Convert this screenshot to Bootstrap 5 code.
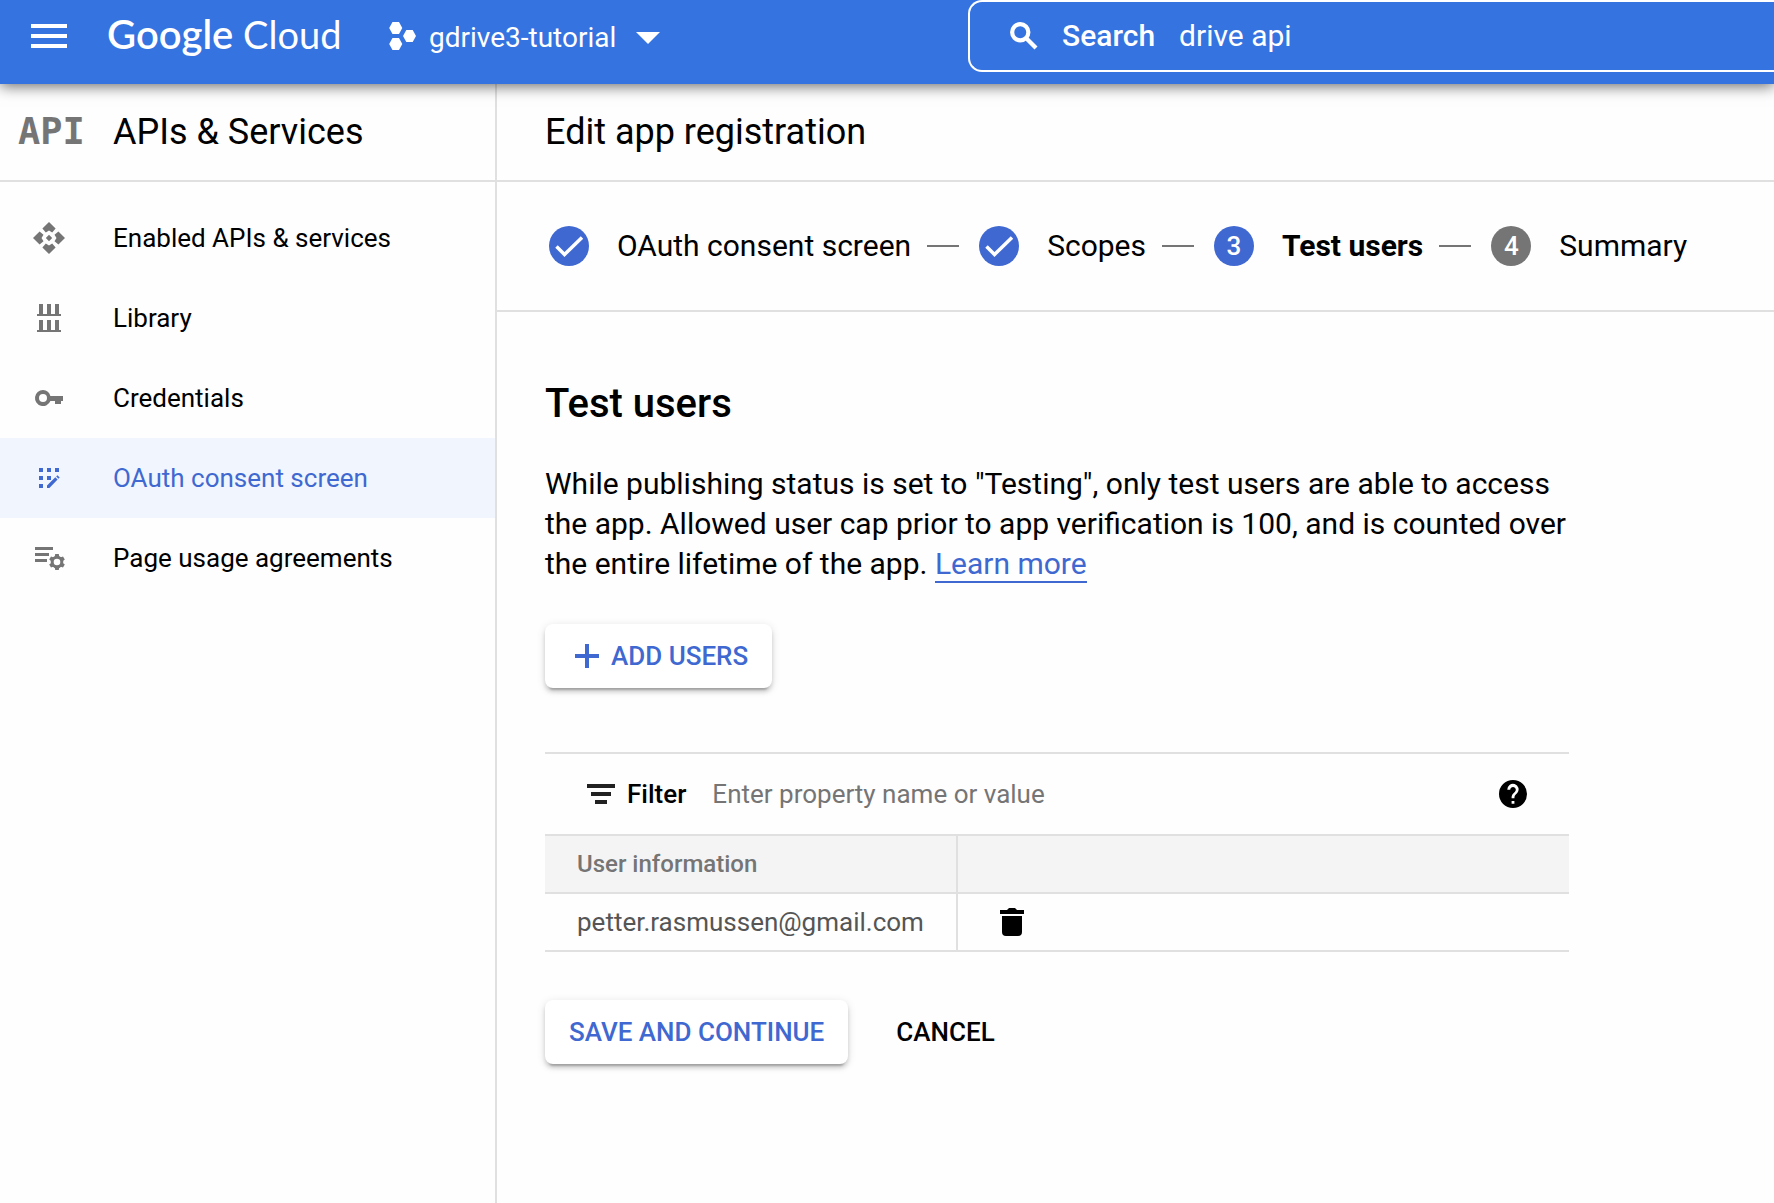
<!DOCTYPE html>
<html lang="en">
<head>
<meta charset="utf-8">
<meta name="viewport" content="width=device-width, initial-scale=1">
<title>Edit app registration – APIs &amp; Services – Google Cloud</title>
<link href="https://cdn.jsdelivr.net/npm/bootstrap@5.3.0/dist/css/bootstrap.min.css" rel="stylesheet">
<style>
  :root { --gc-header: #3573e1; --gc-blue: #3f68d1; --gc-line: #e0e0e0; --gc-grey: #757575; }
  body { font-family: Roboto, "Liberation Sans", sans-serif; font-size: 26px; line-height: 32px; color: #000; background: #fefefe; }
  svg { display: block; flex: none; }
  .topbar { height: 84px; background: var(--gc-header); color: #fff; box-shadow: 0 2px 14px rgba(0, 0, 0, .6); z-index: 2; }
  .icon-btn { background: none; border: 0; padding: 0; color: inherit; }
  .topbar-left { width: 968px; padding-left: 31px; padding-bottom: 12px; }
  .brand { font-family: Lato, "Open Sans", sans-serif; font-size: 38px; line-height: 44px; margin-left: 40px; padding-bottom: 4px; width: 234px; }
  .brand-strong { font-size: 40px; font-weight: 600; }
  .project { font-size: 28px; line-height: 36px; margin-left: 48px; gap: 12px; }
  .project span { padding-top: 4px; }
  .searchbox { height: 72px; border: 2px solid #fff; border-right: 0; border-radius: 14px 0 0 14px; padding-left: 36px; font-size: 30px; }
  .searchbox label { margin: 0 24px 0 20px; }
  .searchbox input { background: none; border: 0; outline: 0; color: #fff; padding: 0; min-width: 0; }
  .shell { min-height: calc(100vh - 84px); }
  .sidebar { width: 497px; border-right: 2px solid var(--gc-line); }
  .titlebar { height: 98px; border-bottom: 2px solid var(--gc-line); }
  .titlebar h1, .titlebar h2 { font-size: 36px; line-height: 44px; font-weight: 400; margin: 0; }
  .api-head { padding-left: 18px; }
  .api-mark { width: 95px; font: 700 37px/44px "DejaVu Sans Mono", monospace; color: var(--gc-grey); }
  .side-link { height: 80px; padding-left: 33px; color: #000; gap: 48px; }
  .side-link svg { color: var(--gc-grey); }
  .side-link.active { background: #f0f5fe; color: var(--gc-blue); }
  .side-link.active svg { color: var(--gc-blue); }
  .stepper { height: 130px; border-bottom: 2px solid var(--gc-line); padding: 0 52px; font-size: 30px; line-height: 40px; }
  .step-dot { width: 40px; height: 40px; background: var(--gc-blue); color: #fff; font-size: 26px; margin-right: 28px; }
  .step-dot.pending { background: var(--gc-grey); }
  .step-line { width: 32px; height: 2px; background: var(--gc-grey); margin: 0 20px 0 16px; }
  .panel { padding: 66px 48px 48px; }
  .panel-inner { max-width: 1024px; }
  .panel h3 { font-size: 40px; line-height: 52px; font-weight: 500; margin: 0 0 34px; }
  .intro { font-size: 30px; line-height: 40px; margin: 0 0 40px; }
  .intro a { color: var(--gc-blue); text-decoration: none; border-bottom: 2px solid var(--gc-blue); }
  .action { height: 64px; padding: 0 24px; border: 0; border-radius: 8px; font-size: 26px; line-height: 32px; font-weight: 500; color: var(--gc-blue); }
  .action svg { margin: 0 8px 0 4px; }
  .raised { background: #fff; box-shadow: 0 6px 2px -4px rgba(0, 0, 0, .2), 0 4px 4px rgba(0, 0, 0, .14), 0 2px 10px rgba(0, 0, 0, .12); }
  .filterbar { height: 84px; margin-top: 64px; border-top: 2px solid var(--gc-line); border-bottom: 2px solid var(--gc-line); padding: 0 42px; }
  .filterbar label { margin: 0 26px 0 12px; }
  .filterbar input { border: 0; outline: 0; background: none; padding: 0; min-width: 0; }
  .filterbar input::placeholder { color: var(--gc-grey); opacity: 1; }
  .users { margin: 0 0 48px; border-collapse: separate; border-spacing: 0; }
  .users th, .users td { height: 58px; padding: 0 0 0 32px; border: 0; border-bottom: 2px solid var(--gc-line); vertical-align: middle; }
  .users th { font-size: 24px; font-weight: 500; color: var(--gc-grey); background: #f4f4f4; }
  .users td { background: transparent; color: #555; }
  .users .col-user { width: 413px; border-right: 2px solid var(--gc-line); }
  .users .col-tools { padding-left: 42px; }
</style>
</head>
<body>
<header class="topbar d-flex position-relative">
  <div class="topbar-left d-flex align-items-center flex-shrink-0">
    <button class="icon-btn" type="button" aria-label="Navigation menu">
      <svg width="36" height="24" fill="currentColor"><path d="M0 0h36v4H0zM0 10h36v4H0zM0 20h36v4H0z"/></svg>
    </button>
    <a class="brand text-white text-decoration-none text-nowrap" href="#"><span class="brand-strong">Google</span> <span>Cloud</span></a>
    <button class="icon-btn project d-flex align-items-center" type="button">
      <svg width="28" height="28" viewBox="0 0 28 28" fill="currentColor"><path d="M3.500 0h6.500l3.300 6-3.300 6H3.500L.2 6zM3.500 16h6.500l3.300 6-3.300 6H3.500L.2 22zM17.300 8h6.400l3.300 6-3.300 6h-6.400L14 14z"/></svg>
      <span>gdrive3-tutorial</span>
      <svg class="ms-2 mt-1" width="24" height="12" fill="currentColor"><path d="M0 0h24L12 12z"/></svg>
    </button>
  </div>
  <div class="searchbox d-flex align-items-center flex-grow-1">
    <svg width="36" height="36" viewBox="0 0 24 24" fill="none" stroke="#fff" stroke-width="2.800"><circle cx="9.500" cy="9.500" r="5.400"/><path d="M13.500 13.500l6.500 6.500"/></svg>
    <label class="fw-medium" for="q">Search</label>
    <input class="flex-grow-1" id="q" type="text" value="drive api">
  </div>
</header>
<div class="shell d-flex">
  <aside class="sidebar flex-shrink-0">
    <div class="titlebar api-head d-flex align-items-center">
      <span class="api-mark" aria-hidden="true">API</span>
      <h2>APIs &amp; Services</h2>
    </div>
    <nav class="nav flex-column pt-3">
      <a class="side-link d-flex align-items-center text-decoration-none" href="#">
        <svg width="32" height="32" viewBox="0 0 32 32" fill="currentColor"><path d="M16 0l6.600 6.600-3.400 3.900L16 8.500l-3.200 2L9.400 6.600zM16 32l-6.600-6.600 3.400-3.900 3.200 2 3.200-2 3.400 3.900zM0 16l6.600-6.600 3.900 3.400-2 3.200 2 3.200-3.900 3.400zM32 16l-6.600 6.600-3.900-3.400 2-3.200-2-3.200 3.900-3.400zM16 12.800l3.200 3.200-3.200 3.200-3.200-3.200z"/></svg>
        <span>Enabled APIs &amp; services</span>
      </a>
      <a class="side-link d-flex align-items-center text-decoration-none" href="#">
        <svg width="32" height="32" viewBox="0 0 32 32" fill="currentColor"><path d="M6 2h4v10h4V2h4v10h4V2h4v10h2v2H4v-2h2zM6 18h4v10h4V18h4v10h4V18h4v10h2v2H4v-2h2z"/></svg>
        <span>Library</span>
      </a>
      <a class="side-link d-flex align-items-center text-decoration-none" href="#">
        <svg width="32" height="32" viewBox="0 0 32 32" fill="currentColor"><path fill-rule="evenodd" d="M10 8a8 8 0 0 1 7.400 6H30v5h-2v3h-6v-3h-4.600A8 8 0 1 1 10 8zm0 4a4 4 0 1 0 0 8 4 4 0 0 0 0-8z"/></svg>
        <span>Credentials</span>
      </a>
      <a class="side-link active d-flex align-items-center text-decoration-none" href="#" aria-current="page">
        <svg width="32" height="32" viewBox="0 0 32 32" fill="currentColor"><path d="M6 6h4v4H6zM14 6h4v4h-4zM22 6h4v4h-4zM6 14h4v4H6zM14 14h4v4h-4zM6 22h4v4H6zM14 26v-2.400l8.300-8.300 2.300 2.300-8.200 8.400zM23.200 14.400l1.200-1.200 2.300 2.300-1.200 1.200z"/></svg>
        <span>OAuth consent screen</span>
      </a>
      <a class="side-link d-flex align-items-center text-decoration-none" href="#">
        <svg width="32" height="32" viewBox="0 0 32 32" fill="currentColor"><path d="M2 5h18v3H2zM2 11h14v3H2zM2 17h12v3H2z"/><circle cx="24" cy="20" r="4.800" fill="none" stroke="currentColor" stroke-width="3"/><path d="M22.200 12h3.600l.6 3.600h-4.800zM22.200 28h3.600l.6-3.600h-4.800zM16.200 17.600l1.800-3.200 3.400 1.400-2.400 4zM31.800 17.600L30 14.400l-3.400 1.400 2.400 4zM16.200 22.400l1.800 3.200 3.400-1.400-2.400-4zM31.800 22.400L30 25.600l-3.400-1.400 2.400-4z"/></svg>
        <span>Page usage agreements</span>
      </a>
    </nav>
  </aside>
  <main class="flex-grow-1">
    <div class="titlebar d-flex align-items-center px-5"><h1>Edit app registration</h1></div>
    <ol class="stepper d-flex align-items-center list-unstyled m-0 text-nowrap">
      <li class="d-flex align-items-center">
        <span class="step-dot rounded-circle"><svg width="40" height="40" fill="none" stroke="#fff" stroke-width="3.500"><path d="M7.500 20.500l8 8L33 11.500"/></svg></span>
        <span>OAuth consent screen</span><span class="step-line"></span>
      </li>
      <li class="d-flex align-items-center">
        <span class="step-dot rounded-circle"><svg width="40" height="40" fill="none" stroke="#fff" stroke-width="3.500"><path d="M7.500 20.500l8 8L33 11.500"/></svg></span>
        <span>Scopes</span><span class="step-line"></span>
      </li>
      <li class="d-flex align-items-center" aria-current="step">
        <span class="step-dot rounded-circle text-center fw-medium">3</span>
        <span class="fw-bold">Test users</span><span class="step-line"></span>
      </li>
      <li class="d-flex align-items-center">
        <span class="step-dot pending rounded-circle text-center fw-medium">4</span>
        <span>Summary</span>
      </li>
    </ol>
    <section class="panel">
      <div class="panel-inner">
        <h3>Test users</h3>
        <p class="intro">While publishing status is set to "Testing", only test users are able to access the app. Allowed user cap prior to app verification is 100, and is counted over the entire lifetime of the app. <a href="#">Learn more</a></p>
        <button class="action raised d-flex align-items-center" type="button">
          <svg width="30" height="32" fill="none" stroke="currentColor" stroke-width="4"><path d="M2 16h24M14 4v24"/></svg>
          <span>ADD USERS</span>
        </button>
        <div class="filterbar d-flex align-items-center">
          <svg width="28" height="20" fill="#212121"><path d="M0 0h28v4H0zM4 8h20v4H4zM8 16h12v4H8z"/></svg>
          <label class="fw-medium" for="filter">Filter</label>
          <input class="flex-grow-1" id="filter" type="text" placeholder="Enter property name or value">
          <button class="icon-btn" type="button" aria-label="Help">
            <svg width="28" height="28" viewBox="2 2 20 20"><path d="M12 2a10 10 0 1 0 0 20 10 10 0 0 0 0-20zm1 17h-2v-2h2zm2.070-7.750l-.9.92C13.450 12.900 13 13.500 13 15h-2v-.5c0-1.100.45-2.100 1.170-2.830l1.240-1.260A2 2 0 1 0 10 9H8a4 4 0 1 1 7.070 2.250z"/></svg>
          </button>
        </div>
        <table class="table users">
          <thead><tr><th class="col-user" scope="col">User information</th><th aria-label="Actions"></th></tr></thead>
          <tbody><tr>
            <td class="col-user">petter.rasmussen@gmail.com</td>
            <td class="col-tools"><button class="icon-btn d-block text-black" type="button" aria-label="Delete user"><svg width="24" height="28" fill="currentColor"><path d="M0 2h7l2-2h6l2 2h7v4H0zM2 8h20v16a4 4 0 0 1-4 4H6a4 4 0 0 1-4-4z"/></svg></button></td>
          </tr></tbody>
        </table>
        <div class="d-flex gap-4">
          <button class="action raised" type="button">SAVE AND CONTINUE</button>
          <button class="action bg-transparent text-black" type="button">CANCEL</button>
        </div>
      </div>
    </section>
  </main>
</div>
<script src="https://cdn.jsdelivr.net/npm/bootstrap@5.3.0/dist/js/bootstrap.bundle.min.js"></script>
</body>
</html>
